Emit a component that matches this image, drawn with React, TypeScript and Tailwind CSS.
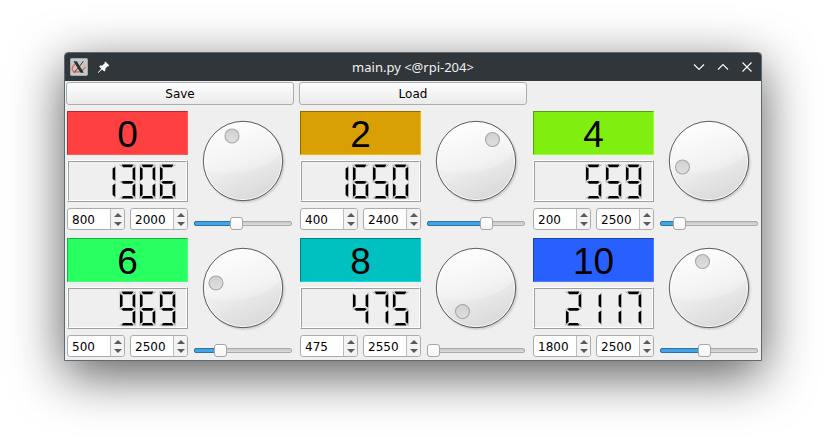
import React from "react";

type Servo = {
  channel: number;
  color: string;
  value: number;
  min: number;
  max: number;
  knobX: number;
  knobY: number;
  slider: number;
};

const SERVOS: Servo[] = [
  { channel: 0, color: "bg-[#ff4040] border-t-[#b32c2c] border-l-[#b32c2c] border-b-[#ff5a5a] border-r-[#ff5a5a]", value: 1306, min: 800, max: 2000, knobX: 32, knobY: 18, slider: 42 },
  { channel: 2, color: "bg-[#d8a004] border-t-[#8f6a02] border-l-[#8f6a02] border-b-[#ffb700] border-r-[#ffb700]", value: 1650, min: 400, max: 2400, knobX: 59.5, knobY: 21.5, slider: 59 },
  { channel: 4, color: "bg-[#80ef10] border-t-[#559f0b] border-l-[#559f0b] border-b-[#97ff2e] border-r-[#97ff2e]", value: 559, min: 200, max: 2500, knobX: 16.5, knobY: 49, slider: 19 },
  { channel: 6, color: "bg-[#28ff60] border-t-[#1eb044] border-l-[#1eb044] border-b-[#48ff78] border-r-[#48ff78]", value: 969, min: 500, max: 2500, knobX: 16, knobY: 38, slider: 26 },
  { channel: 8, color: "bg-[#00c0c0] border-t-[#008080] border-l-[#008080] border-b-[#00dfdf] border-r-[#00dfdf]", value: 475, min: 475, max: 2550, knobX: 29.5, knobY: 66.5, slider: 6 },
  { channel: 10, color: "bg-[#2860ff] border-t-[#1c43b2] border-l-[#1c43b2] border-b-[#4a7aff] border-r-[#4a7aff]", value: 2117, min: 1800, max: 2500, knobX: 36.5, knobY: 16.5, slider: 44 },
];

const SEGMENTS: Record<string, string> = {
  a: "2.5,0.6 14.5,0.6 12.8,3.2 4.2,3.2",
  b: "0.9,3 3.6,4.4 3.6,15 0.9,16.6",
  c: "16.3,3 13.6,4.4 13.6,15 16.3,16.6",
  d: "4.2,17 12.8,17 14.7,18.3 12.8,19.7 4.2,19.7 2.3,18.3",
  e: "0.9,19.8 3.6,21.2 3.6,31 0.9,32.8",
  f: "16.3,19.8 13.6,21.2 13.6,31 16.3,32.8",
  g: "4.2,32 12.8,32 14.5,34.6 2.5,34.6",
};

const TIPS: Record<string, string> = {
  a: "M0.5 0.8L3.8 3M16.5 0.8L13.2 3",
  b: "M0.6 1.8L2.8 4.4M0.6 17.2L2.8 15.2",
  c: "M16.5 1.8L14.4 4.4M16.5 17.2L14.4 15.2",
  d: "M0.8 18.3L4 17M16.2 18.3L13 17",
  e: "M0.6 19.3L2.8 20.8M0.6 33.8L2.8 31.2",
  f: "M16.5 19.3L14.4 20.8M16.5 33.8L14.4 31.2",
  g: "M0.6 34.5L3.8 32.2M16.5 34.5L13.2 32.2",
};

const DIGITS: Record<string, string> = {
  "0": "abcefg",
  "1": "cf",
  "2": "acdeg",
  "3": "acdfg",
  "4": "bcdf",
  "5": "abdfg",
  "6": "abdefg",
  "7": "acf",
  "8": "abcdefg",
  "9": "abcdfg",
};

function Digit({ char }: { char: string }) {
  return (
    <svg width="17" height="35" viewBox="0 0 17 35" className="block shrink-0">
      {DIGITS[char].split("").map((s) => (
        <g key={s}>
          <path d={TIPS[s]} stroke="#a0a0a0" strokeWidth="0.9" fill="none" />
          <polygon points={SEGMENTS[s]} fill="#000" />
        </g>
      ))}
    </svg>
  );
}

function Lcd({ value }: { value: number }) {
  return (
    <div className="h-[42px] w-[121px] border border-t-white border-l-white border-b-[#9f9f9f] border-r-[#9f9f9f]">
      <div className="flex h-full justify-end gap-[3px] border border-t-[#9f9f9f] border-l-[#9f9f9f] border-b-white border-r-white pt-[2px] pr-[10px]">
        {String(value).split("").map((c, i) => (
          <Digit key={i} char={c} />
        ))}
      </div>
    </div>
  );
}

function SpinBox({ value }: { value: number }) {
  return (
    <div className="flex h-[22px] w-[58px] overflow-hidden rounded-[3px] border border-[#acacac] bg-white">
      <span className="flex-1 pt-px pl-[4px] text-[12px] leading-[20px]">{value}</span>
      <div className="flex w-[14px] flex-col items-center justify-center gap-[5px] border-l border-[#bdbdbd] bg-[#f3f3f3]">
        <svg width="8" height="4" viewBox="0 0 8 4" className="block">
          <path d="M4 0L8 4H0Z" fill="#5a5a5a" />
        </svg>
        <svg width="8" height="4" viewBox="0 0 8 4" className="block">
          <path d="M4 4L8 0H0Z" fill="#5a5a5a" />
        </svg>
      </div>
    </div>
  );
}

function Dial({ x, y }: { x: number; y: number }) {
  return (
    <svg width="88" height="88" viewBox="-3 -3 88 88" className="block">
      <circle cx="42.7" cy="42.7" r="41" fill="#000" opacity="0.04" />
      <circle cx="42" cy="42" r="40.5" fill="#000" opacity="0.08" />
      <circle cx="41" cy="41" r="39.2" fill="url(#dialBody)" />
      <circle cx="41" cy="41" r="38.7" fill="none" stroke="#fff" strokeOpacity="0.85" strokeWidth="1" />
      <path d="M2.8 49C16 56 62 55 78.5 33A38.4 38.4 0 0 0 2.8 49Z" fill="url(#dialGloss)" />
      <circle cx="41" cy="41" r="39.7" fill="none" stroke="#4c4c4c" strokeWidth="0.9" />
      <circle cx={x - 2} cy={y - 2} r="7" fill="url(#dialKnob)" stroke="#a6a6a6" strokeWidth="1.1" />
    </svg>
  );
}

function Slider({ pos }: { pos: number }) {
  return (
    <div className="relative h-[14px] w-[98px] pt-[5px]">
      <div className="h-[5px] rounded-[2px] border border-[#ababab] bg-gradient-to-b from-[#c8c8c8] to-[#dcdcdc]" />
      {pos > 6 && (
        <div
          className="absolute top-[5px] left-0 h-[5px] rounded-l-[2px] border border-[#2873a8] bg-[#44a3e3]"
          style={{ width: pos }}
        />
      )}
      <div
        className="absolute top-[1px] h-[13px] w-[13px] rounded-[3px] border border-[#a6a6a6] bg-gradient-to-b from-white to-[#f4f4f4]"
        style={{ left: pos - 6 }}
      />
    </div>
  );
}

function ServoPanel({ servo }: { servo: Servo }) {
  return (
    <div className="flex h-[127px] w-[233px]">
      <div className="flex w-[121px] flex-col">
        <div className={"flex h-[44px] items-center justify-center border pt-[2px] font-['Liberation_Sans',Arial,sans-serif] text-[37px] leading-none " + servo.color}>
          {servo.channel}
        </div>
        <div className="mt-[5px]">
          <Lcd value={servo.value} />
        </div>
        <div className="mt-[6px] flex justify-between">
          <SpinBox value={servo.min} />
          <SpinBox value={servo.max} />
        </div>
      </div>
      <div className="ml-[6px] flex w-[98px] flex-col items-center">
        <div className="mt-[6px]">
          <Dial x={servo.knobX} y={servo.knobY} />
        </div>
        <div className="mt-[11px]">
          <Slider pos={servo.slider} />
        </div>
      </div>
    </div>
  );
}

function PushButton({ label }: { label: string }) {
  return (
    <button className="h-[23px] w-[228px] rounded-[3px] border border-[#adadad] bg-gradient-to-b from-[#fdfdfd] to-[#ebebeb] pt-px text-[12px] leading-[20px]">
      {label}
    </button>
  );
}

function TitleBar() {
  return (
    <div className="flex h-[28px] items-center rounded-t-[3px] bg-[#31363b] text-[#eff0f1]">
      <div className="flex flex-1 items-center">
        <svg width="18" height="18" viewBox="0 0 18 18" className="ml-[5px] block">
          <rect x="0.5" y="0.5" width="17" height="17" rx="1" fill="#c3c9ce" stroke="#a2aab0" />
          <path d="M5.5 5.5C1 9 1 13.5 6 14C10 14.3 14.5 11.5 15.5 8.5" fill="none" stroke="#e8764a" strokeWidth="1.5" />
          <path d="M11 5C14.5 4.8 16.5 6.5 15.5 9" fill="none" stroke="#ecb98e" strokeWidth="1.2" />
          <path d="M3.5 3.2H6.8L13.8 14.8H10.5Z" fill="#2b3034" />
          <path d="M13.3 3.2L9.8 8M7.8 10.2L4 14.8" stroke="#3b4044" strokeWidth="1" />
        </svg>
        <svg width="13" height="13" viewBox="0 0 13 13" className="ml-[9px] block">
          <path d="M8.4 0.6L12.3 4.5L11.4 5.4L10.7 5.2L8.5 7.5L8.3 9.6L7.3 10.6L5 8.6L1.2 12L0.8 11.6L4.2 7.8L2.2 5.6L3.2 4.6L5.4 4.4L7.7 2.2L7.5 1.5Z" fill="#fcfcfc" />
        </svg>
      </div>
      <span className="relative top-px left-[4px] font-['Noto_Sans',sans-serif] text-[13px]">main.py &lt;@rpi-204&gt;</span>
      <div className="flex flex-1 justify-end gap-[12px] pr-[8px]">
        <svg width="12" height="12" viewBox="0 0 12 12" fill="none" stroke="#fcfcfc" strokeWidth="1.1">
          <path d="M1 3.5L6 8.5L11 3.5" />
        </svg>
        <svg width="12" height="12" viewBox="0 0 12 12" fill="none" stroke="#fcfcfc" strokeWidth="1.1">
          <path d="M1 8.5L6 3.5L11 8.5" />
        </svg>
        <svg width="12" height="12" viewBox="0 0 12 12" fill="none" stroke="#fcfcfc" strokeWidth="1.1">
          <path d="M1.5 1.5L10.5 10.5M10.5 1.5L1.5 10.5" />
        </svg>
      </div>
    </div>
  );
}

export default function App() {
  return (
    <div className="h-[437px] w-[826px] overflow-hidden bg-white pt-[52px] pl-[64px] font-['DejaVu_Sans',sans-serif] text-black">
      <svg width="0" height="0" className="absolute">
        <defs>
          <linearGradient id="dialBody" x1="0.3" y1="0" x2="0.7" y2="1">
            <stop offset="0" stopColor="#fafafa" />
            <stop offset="0.5" stopColor="#eeeeee" />
            <stop offset="1" stopColor="#d8d8d8" />
          </linearGradient>
          <linearGradient id="dialGloss" x1="0.3" y1="0" x2="0.6" y2="1">
            <stop offset="0" stopColor="#fff" stopOpacity="0.6" />
            <stop offset="1" stopColor="#fff" stopOpacity="0.18" />
          </linearGradient>
          <linearGradient id="dialKnob" x1="0" y1="0" x2="0" y2="1">
            <stop offset="0" stopColor="#d0d0d0" />
            <stop offset="1" stopColor="#e0e0e0" />
          </linearGradient>
        </defs>
      </svg>
      <div className="h-[309px] w-[698px] rounded-t-[4px] border border-[#5d6a73] bg-[#efefef] shadow-[0_14px_52px_rgba(0,0,0,0.65)]">
        <TitleBar />
        <div className="flex gap-[5px] pt-[1px] pl-[1px]">
          <PushButton label="Save" />
          <PushButton label="Load" />
        </div>
        <div className="mt-[6px] pl-[2px]">
          <div className="grid grid-cols-[233px_233px_228px]">
            {SERVOS.map((s) => (
              <ServoPanel key={s.channel} servo={s} />
            ))}
          </div>
        </div>
      </div>
    </div>
  );
}
